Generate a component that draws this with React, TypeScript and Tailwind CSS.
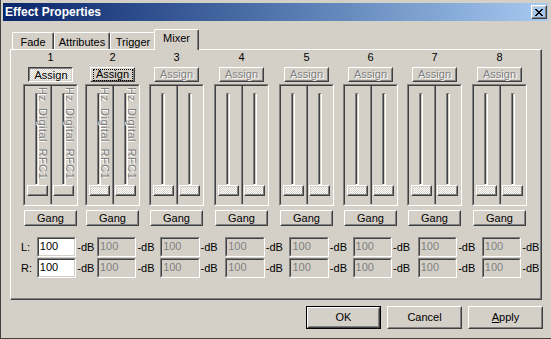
import React from "react";

const CHECK =
  "bg-[repeating-conic-gradient(#ffffff_0%_25%,#d4d0c8_0%_50%)] bg-[length:2px_2px]";
const DIS = "text-[#808080] [text-shadow:1px_1px_0_#ffffff]";

function Raised({
  className = "",
  inner = "",
  children,
}: {
  className?: string;
  inner?: string;
  children?: React.ReactNode;
}) {
  return (
    <div
      className={`border border-t-white border-l-white border-r-[#404040] border-b-[#404040] ${className}`}
    >
      <div
        className={`flex h-full w-full items-center justify-center border border-t-[#d4d0c8] border-l-[#d4d0c8] border-r-[#808080] border-b-[#808080] ${inner}`}
      >
        {children}
      </div>
    </div>
  );
}

function Sunken({
  className = "",
  inner = "",
  children,
}: {
  className?: string;
  inner?: string;
  children?: React.ReactNode;
}) {
  return (
    <div
      className={`border border-t-[#808080] border-l-[#808080] border-r-white border-b-white ${className}`}
    >
      <div
        className={`h-full w-full border border-t-[#404040] border-l-[#404040] border-r-[#d4d0c8] border-b-[#d4d0c8] ${inner}`}
      >
        {children}
      </div>
    </div>
  );
}

function Channel({ label, plainThumb }: { label: boolean; plainThumb: boolean }) {
  return (
    <div className="relative flex flex-1 flex-col items-center">
      <div className="mt-[7px] h-[92px] w-[4px] border border-t-[#808080] border-l-[#808080] border-r-white border-b-white bg-[linear-gradient(to_right,#404040_50%,#d4d0c8_50%)]" />
      <Raised className="h-[11px] w-[21px]" inner={plainThumb ? "bg-[#d4d0c8]" : CHECK} />
      {label && (
        <div
          className={`absolute left-[12px] top-[1px] whitespace-nowrap text-[11px] leading-[11px] tracking-[0.5px] [word-spacing:3px] [writing-mode:vertical-rl] ${DIS}`}
        >
          Hz Digital RFC1
        </div>
      )}
    </div>
  );
}

const colGaps = [
  "",
  "ml-[7px]",
  "ml-[9px]",
  "ml-[10px]",
  "ml-[10px]",
  "ml-[9px]",
  "ml-[9px]",
  "ml-[10px]",
];

const dbWidths = [
  "w-[21px]",
  "w-[24px]",
  "w-[26px]",
  "w-[25px]",
  "w-[24px]",
  "w-[26px]",
  "w-[25px]",
  "w-[20px]",
];

function Column({ idx }: { idx: number }) {
  let assign: React.ReactNode;
  if (idx === 0) {
    assign = (
      <div className="mt-[3px] h-[15px] w-[45px] border border-t-[#404040] border-l-[#404040] border-r-white border-b-white">
        <div
          className={`flex h-full w-full items-center justify-center border border-t-[#808080] border-l-[#808080] border-r-[#d4d0c8] border-b-[#d4d0c8] pl-[1px] pt-[1px] leading-[13px] ${CHECK}`}
        >
          Assign
        </div>
      </div>
    );
  } else if (idx === 1) {
    assign = (
      <Raised className="mt-[3px] h-[15px] w-[45px]" inner="leading-[13px]">
        <span className="flex h-[12px] w-[40px] items-center justify-center border border-dotted border-black">
          Assign
        </span>
      </Raised>
    );
  } else {
    assign = (
      <Raised className="mt-[3px] h-[15px] w-[45px]" inner={`leading-[13px] ${DIS}`}>
        Assign
      </Raised>
    );
  }
  return (
    <div className={`flex w-[55px] flex-col items-center ${colGaps[idx]}`}>
      <div className="mt-[1px] h-[13px] leading-[13px]">{idx + 1}</div>
      {assign}
      <Sunken className="mt-[2px] h-[122px] w-[55px]" inner="flex">
        <Channel label={idx < 2} plainThumb={idx === 0} />
        <div className="w-[2px] border-l border-l-[#808080] bg-[#404040]" />
        <Channel label={idx < 2} plainThumb={idx === 0} />
      </Sunken>
      <Raised className="mt-[4px] h-[16px] w-[53px]" inner="leading-[13px]">
        Gang
      </Raised>
    </div>
  );
}

function CloseGlyph() {
  const px: [number, number, number][] = [
    [0, 0, 2],
    [6, 0, 2],
    [1, 1, 2],
    [5, 1, 2],
    [2, 2, 4],
    [3, 3, 2],
    [2, 4, 4],
    [1, 5, 2],
    [5, 5, 2],
    [0, 6, 2],
    [6, 6, 2],
  ];
  return (
    <svg width="8" height="7" viewBox="0 0 8 7" shapeRendering="crispEdges">
      {px.map(([x, y, w], i) => (
        <rect key={i} x={x} y={y} width={w} height={1} fill="#000" />
      ))}
    </svg>
  );
}

export default function App() {
  const cols = [0, 1, 2, 3, 4, 5, 6, 7];
  return (
    <div className="flex h-[339px] w-[551px] flex-col overflow-hidden border-l border-b border-l-[#404040] border-b-[#404040] bg-[#d4d0c8] font-['Liberation_Sans',Arial,sans-serif] text-[11px] text-black">
      {/* Title bar */}
      <div className="ml-[2px] mr-[3px] mt-[3px] flex h-[18px] items-center justify-between bg-linear-to-r from-[#0a246a] to-[#a6caf0] pl-[2px] pr-[1px]">
        <span className="text-[12px] font-bold leading-[14px] text-white">Effect Properties</span>
        <Raised className="h-[14px] w-[16px]">
          <CloseGlyph />
        </Raised>
      </div>

      {/* Tabs */}
      <div className="relative z-10 ml-[11px] mt-[8px] flex h-[20px] items-end">
        <div className="h-[17px] w-[42px] rounded-t-[2px] border-t border-l border-r border-t-white border-l-white border-r-[#404040] pt-[3px] text-center leading-[13px] shadow-[inset_-1px_0_0_#808080]">
          Fade
        </div>
        <div className="h-[17px] w-[56px] rounded-t-[2px] border-t border-l border-r border-t-white border-l-white border-r-[#404040] pt-[3px] text-center leading-[13px] shadow-[inset_-1px_0_0_#808080]">
          Attributes
        </div>
        <div className="h-[17px] w-[46px] rounded-t-[2px] border-t border-l border-r border-t-white border-l-white border-r-[#404040] pt-[3px] text-center leading-[13px] shadow-[inset_-1px_0_0_#808080]">
          Trigger
        </div>
        <div className="relative -mb-[1px] -ml-[2px] h-[21px] w-[45px] rounded-t-[2px] border-t border-l border-r border-t-white border-l-white border-r-[#404040] bg-[#d4d0c8] pt-[2px] text-center leading-[13px] shadow-[inset_-1px_0_0_#808080]">
          Mixer
        </div>
      </div>

      {/* Panel */}
      <div className="ml-[9px] flex h-[251px] w-[532px] flex-col border border-t-white border-l-white border-r-[#404040] border-b-[#404040] shadow-[inset_-1px_-1px_0_#808080]">
        <div className="flex pl-[12px]">
          {cols.map((i) => (
            <Column key={i} idx={i} />
          ))}
        </div>
        <div className="mt-[11px] flex flex-col gap-[1px] pl-[10px]">
          {["L:", "R:"].map((lab) => (
            <div key={lab} className="flex h-[20px] items-center">
              <div className="w-[16px] leading-[13px]">{lab}</div>
              {cols.map((i) => (
                <React.Fragment key={i}>
                  <Sunken
                    className="h-[20px] w-[40px]"
                    inner={`px-[1px] leading-[14px] ${
                      i === 0 ? "bg-white text-black" : "bg-[#d4d0c8] text-[#808080]"
                    }`}
                  >
                    100
                  </Sunken>
                  <div className={`${dbWidths[i]} whitespace-nowrap pl-[1px] pt-[1px] leading-[13px]`}>
                    -dB
                  </div>
                </React.Fragment>
              ))}
            </div>
          ))}
        </div>
      </div>

      {/* Buttons */}
      <div className="mt-[6px] flex justify-end gap-[6px] pr-[8px]">
        <div className="h-[23px] w-[75px] border border-black">
          <Raised className="h-full w-full" inner="leading-[13px]">
            OK
          </Raised>
        </div>
        <Raised className="h-[23px] w-[75px]" inner="leading-[13px]">
          Cancel
        </Raised>
        <Raised className="h-[23px] w-[75px]" inner="leading-[13px]">
          <span>
            <span className="underline">A</span>pply
          </span>
        </Raised>
      </div>
    </div>
  );
}
